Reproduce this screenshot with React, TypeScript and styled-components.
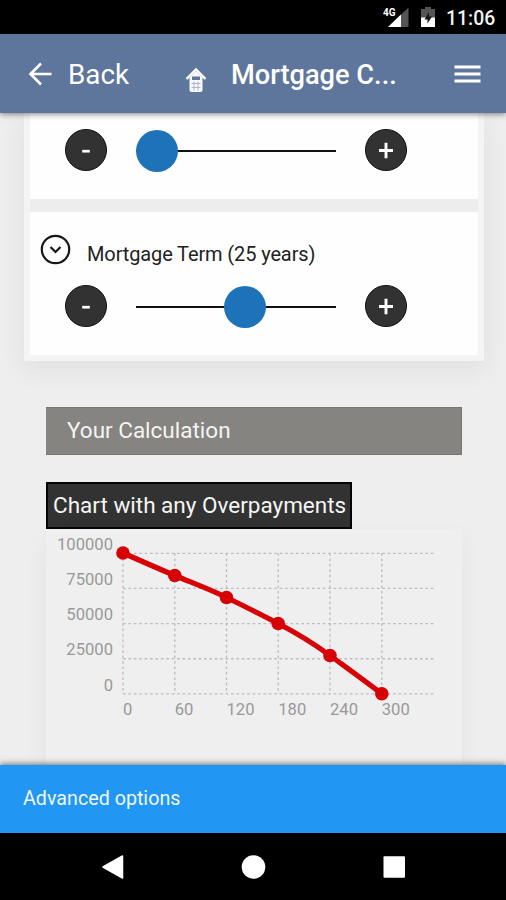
import React from "react";
import styled, { createGlobalStyle } from "styled-components";

const GlobalStyle = createGlobalStyle`
  * { box-sizing: border-box; }
  body { margin: 0; background: #000; }
`;

const Screen = styled.div`
  width: 506px;
  height: 900px;
  display: flex;
  flex-direction: column;
  overflow: hidden;
  background: #eeeeee;
  font-family: Roboto, "Liberation Sans", sans-serif;
`;

const StatusBar = styled.header`
  flex: 0 0 34px;
  display: flex;
  align-items: center;
  justify-content: flex-end;
  padding-right: 10px;
  background: #000;
`;

const Clock = styled.time`
  width: 50px;
  margin-left: 11px;
  padding-top: 3px;
  color: #f2f2f2;
  font-size: 19.4px;
  font-weight: 500;
  line-height: 24px;
  white-space: nowrap;
`;

const BatterySvg = styled.svg`
  margin: 2px 0 0 11px;
`;

const Toolbar = styled.nav`
  flex: 0 0 79px;
  display: flex;
  align-items: center;
  padding: 0 25px 0 28px;
  background: #5e769b;
  box-shadow: 0 1px 6px rgba(0, 0, 0, 0.5);
  color: #fff;
  z-index: 2;
`;

const BackLabel = styled.span`
  width: 90px;
  margin-left: 16px;
  padding-top: 2px;
  font-size: 27.8px;
  line-height: 36px;
`;

const HomeSvg = styled.svg`
  margin: 12px 0 0 27px;
`;

const Title = styled.h1`
  margin: 0 auto 0 24px;
  padding-top: 2px;
  font-size: 27.2px;
  font-weight: 500;
  line-height: 36px;
`;

const Content = styled.main`
  flex: 1;
  min-height: 0;
  overflow: hidden;
  display: flex;
  flex-direction: column;
`;

const CardGroup = styled.section`
  flex: none;
  width: 460px;
  margin-left: 24px;
  padding: 0 6px 6px;
  background: #f4f4f4;
  box-shadow: 0 8px 26px rgba(0, 0, 0, 0.065);
`;

const CardStack = styled.div`
  display: flex;
  flex-direction: column;
  gap: 13px;
  background: #ededed;
`;

const Card = styled.div<{ $height: number }>`
  height: ${(p) => p.$height}px;
  display: flex;
  flex-direction: column;
  justify-content: flex-end;
  padding-bottom: 27px;
  background: #fefefe;
`;

const CardHeading = styled.div`
  display: flex;
  margin: 0 0 auto 10px;
  padding-top: 22px;
`;

const CardTitle = styled.h2`
  margin: 6px 0 0 16px;
  color: #222;
  font-size: 20px;
  font-weight: 400;
  line-height: 28px;
  letter-spacing: -0.12px;
`;

const SliderRow = styled.div`
  display: flex;
  align-items: flex-start;
  padding-left: 35px;
`;

const StepButton = styled.button`
  width: 42px;
  height: 42px;
  margin-top: 0.5px;
  padding: 0;
  display: grid;
  place-items: center;
  border: 1px solid #111;
  border-radius: 50%;
  background: #323232;
`;

const Track = styled.div`
  width: 200px;
  height: 44px;
  margin: 0 29px;
  display: flex;
  align-items: center;
  background: linear-gradient(#111, #111) 0 22px / 100% 2.4px no-repeat;
`;

const Thumb = styled.div<{ $offset: number }>`
  width: 42px;
  height: 42px;
  margin: 2px 0 0 ${(p) => p.$offset}px;
  border-radius: 50%;
  background: #1e73b8;
`;

const ResultHeading = styled.h2`
  flex: none;
  width: 416px;
  height: 48px;
  margin: 46px 0 0 46px;
  padding-left: 21px;
  background: #858480;
  border: 1px solid #777672;
  border-width: 1px 1px 1px 0;
  color: #f4f4f4;
  font-size: 22.5px;
  font-weight: 400;
  line-height: 44px;
`;

const ChartTab = styled.h3`
  flex: none;
  width: 306px;
  height: 47px;
  margin: 27px 0 0 46px;
  padding-left: 5px;
  border: 2px solid #050505;
  background: #323232;
  color: #f5f5f5;
  font-size: 22.5px;
  font-weight: 400;
  line-height: 43px;
  white-space: nowrap;
`;

const ChartCard = styled.section`
  flex: none;
  width: 416px;
  height: 250px;
  margin-left: 46px;
  background: #efefef;
  box-shadow: 0 8px 24px rgba(0, 0, 0, 0.045);
`;

const ChartSvg = styled.svg`
  display: block;
`;

const AxisLabel = styled.text`
  fill: #999;
  font-size: 16.6px;
`;

const OptionsBar = styled.footer`
  flex: 0 0 68px;
  padding: 20px 23px;
  background: #2196f3;
  box-shadow: 0 -1px 6px rgba(0, 0, 0, 0.55);
  color: #edf7ff;
  font-size: 19.7px;
  line-height: 28px;
  z-index: 2;
`;

const SystemNav = styled.nav`
  flex: 0 0 67px;
  display: flex;
  justify-content: space-between;
  align-items: center;
  padding: 0 100px;
  background: #000;
  z-index: 3;
`;

function SignalIcon() {
  return (
    <svg width="27" height="24" viewBox="0 0 27 24">
      <path d="M25.500 2.500v19.500H5z" fill="#555" />
      <path d="M18 9.500V22H5z" fill="#fff" />
      <text x="0" y="11" fill="#fff" stroke="#000" strokeWidth="1.6" paintOrder="stroke" fontSize="10" fontWeight="700">4G</text>
    </svg>
  );
}

function BatteryIcon() {
  return (
    <BatterySvg width="14" height="24" viewBox="0 0 14 24">
      <path d="M4 1h6v2h4v18H0V3h4z" fill="#555" />
      <path d="M0 11.500h14V21H0z" fill="#fff" />
      <path d="M8 6 3.500 13.500h3v4L11 10.500H8z" fill="#151515" />
    </BatterySvg>
  );
}

function HouseIcon() {
  return (
    <HomeSvg width="22" height="26" viewBox="0 0 22 26">
      <path d="M1.500 12 11 2.500l9.500 9.500" fill="none" stroke="#fff" strokeWidth="2.400" />
      <path d="M11 4 4.500 10.500V23q0 2 2 2h9q2 0 2-2V10.500z" fill="#f7f9fc" />
      <path d="M7 9.500h8v3.500H7z" fill="#60779c" />
      <path d="M6.500 16.500h9M6.500 20.500h9M9 14.500v9M13 14.500v9" stroke="#a9b6cb" strokeWidth="1" />
    </HomeSvg>
  );
}

function Stepper({ plus = false }: { plus?: boolean }) {
  return (
    <StepButton aria-label={plus ? "Increase" : "Decrease"}>
      <svg width="16" height="18" viewBox="0 0 16 18">
        {plus ? (
          <path d="M1 9.500h14M8 1.700v15.600" stroke="#fff" strokeWidth="2.900" />
        ) : (
          <path d="M4.200 10.200h7.600" stroke="#fff" strokeWidth="2.700" />
        )}
      </svg>
    </StepButton>
  );
}

function Slider({ offset }: { offset: number }) {
  return (
    <SliderRow>
      <Stepper />
      <Track><Thumb $offset={offset} /></Track>
      <Stepper plus />
    </SliderRow>
  );
}

const months = [0, 60, 120, 180, 240, 300];
const balances = ["100000", "75000", "50000", "25000", "0"];
const points = [[77, 24], [128.800, 46.500], [180.500, 68.500], [232.200, 94.500], [284, 126.500], [335.800, 164.800]];
const gridY = (i: number) => 24.300 + i * 35.150;

function BalanceChart() {
  return (
    <ChartSvg width="416" height="236" viewBox="0 0 416 236">
      <g stroke="#bdbdbd" strokeWidth="1.300" strokeDasharray="2.700 2.700">
        {balances.map((b, i) => <line key={b} x1="77" x2="388" y1={gridY(i)} y2={gridY(i)} />)}
        {points.map(([x]) => <line key={x} x1={x} x2={x} y1="24" y2="165" />)}
      </g>
      {balances.map((b, i) => (
        <AxisLabel key={b} x="67" y={21 + i * 35.150} textAnchor="end">{b}</AxisLabel>
      ))}
      {months.map((m, i) => (
        <AxisLabel key={m} x={77 + i * 51.750} y="185.700">{m}</AxisLabel>
      ))}
      <path
        d="M77 24C94 31.500 111 39 128.800 46.500S163 60 180.500 68.500S215 85.500 232.200 94.500S267 114 284 126.500S319 152 335.800 164.800"
        fill="none" stroke="#d70206" strokeWidth="5.200"
      />
      {points.map(([x, y]) => <circle key={x} cx={x} cy={y} r="6.800" fill="#d70206" />)}
    </ChartSvg>
  );
}

export default function App() {
  return (
    <>
      <GlobalStyle />
      <Screen>
        <StatusBar>
          <SignalIcon />
          <BatteryIcon />
          <Clock>11:06</Clock>
        </StatusBar>
        <Toolbar>
          <svg width="24" height="24" viewBox="0 0 24 24" fill="none" stroke="#fff" strokeWidth="2.600">
            <path d="M13 1.500 2.500 12 13 22.500M2 12h21.500" />
          </svg>
          <BackLabel>Back</BackLabel>
          <HouseIcon />
          <Title>Mortgage C...</Title>
          <svg width="27" height="20" viewBox="0 0 27 20" stroke="#fff" strokeWidth="3.200">
            <path d="M.5 3h26M.5 10h26M.5 17h26" />
          </svg>
        </Toolbar>
        <Content>
          <CardGroup>
            <CardStack>
              <Card $height={86}><Slider offset={0} /></Card>
              <Card $height={143}>
                <CardHeading>
                  <svg width="31" height="31" viewBox="0 0 31 31" fill="none" stroke="#171717" strokeWidth="2.200">
                    <circle cx="15.500" cy="15.500" r="13.700" />
                    <path d="m10.500 13 5 5 5-5" />
                  </svg>
                  <CardTitle>Mortgage Term (25 years)</CardTitle>
                </CardHeading>
                <Slider offset={88} />
              </Card>
            </CardStack>
          </CardGroup>
          <ResultHeading>Your Calculation</ResultHeading>
          <ChartTab>Chart with any Overpayments</ChartTab>
          <ChartCard><BalanceChart /></ChartCard>
        </Content>
        <OptionsBar>Advanced options</OptionsBar>
        <SystemNav>
          <svg width="26" height="26" viewBox="0 0 26 26"><path d="M22.500 2v22L3 13z" fill="#fff" stroke="#fff" strokeWidth="1.500" strokeLinejoin="round" /></svg>
          <svg width="26" height="26" viewBox="0 0 26 26"><circle cx="13.500" cy="13" r="11.800" fill="#fff" /></svg>
          <svg width="26" height="26" viewBox="0 0 26 26"><rect x="3.500" y="2.300" width="21.500" height="21.500" rx="1" fill="#fff" /></svg>
        </SystemNav>
      </Screen>
    </>
  );
}
